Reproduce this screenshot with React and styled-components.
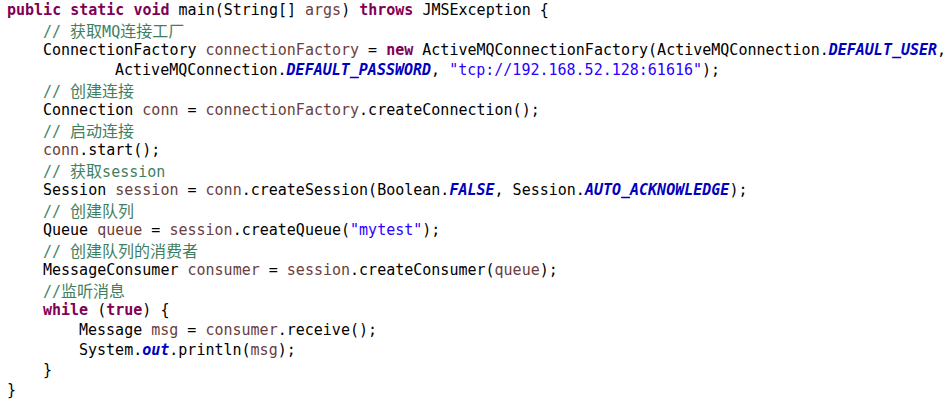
import React from 'react';
import styled, { createGlobalStyle } from 'styled-components';

const GlobalStyle = createGlobalStyle`
  html, body {
    margin: 0;
    padding: 0;
    background: #ffffff;
  }
`;

const S_Editor = styled.div`
  width: 951px;
  height: 409px;
  box-sizing: border-box;
  padding: 0 0 0 7px;
  background: #ffffff;
  font-family: 'DejaVu Sans Mono', 'Liberation Mono', 'Noto Sans CJK SC', monospace;
  font-size: 15px;
  color: #000000;
  display: flex;
  flex-direction: column;
`;

const S_Line = styled.div`
  height: 20px;
  line-height: 20px;
  white-space: pre;
  padding-left: ${(p) => p.$indent * 9}px;
`;

const S_Kw = styled.span`
  color: #7f0055;
  font-weight: bold;
`;

const S_Cmt = styled.span`
  color: #3f7f5f;
`;

const S_Var = styled.span`
  color: #6a3e3e;
`;

const S_Str = styled.span`
  color: #2a00ff;
`;

const S_Field = styled.span`
  color: #0000c0;
  font-weight: bold;
  font-style: italic;
`;

const S_Cjk = styled.span`
  font-family: 'Noto Sans CJK SC', sans-serif;
  font-size: 16px;
`;

const Cmt = ({ children }) => (
  <S_Cmt>
    {React.Children.map(children, (c) =>
      typeof c === 'string'
        ? c.split(/([\u4e00-\u9fff]+)/).map((part, i) =>
            /[\u4e00-\u9fff]/.test(part) ? <S_Cjk key={i}>{part}</S_Cjk> : part
          )
        : c
    )}
  </S_Cmt>
);

export default function App() {
  return (
    <>
      <GlobalStyle />
      <S_Editor>
        <S_Line $indent={0}>
          <S_Kw>public</S_Kw> <S_Kw>static</S_Kw> <S_Kw>void</S_Kw> main(String[] <S_Var>args</S_Var>) <S_Kw>throws</S_Kw> JMSException {'{'}
        </S_Line>
        <S_Line $indent={4}>
          <Cmt>// 获取MQ连接工厂</Cmt>
        </S_Line>
        <S_Line $indent={4}>
          ConnectionFactory <S_Var>connectionFactory</S_Var> = <S_Kw>new</S_Kw> ActiveMQConnectionFactory(ActiveMQConnection.<S_Field>DEFAULT_USER</S_Field>,
        </S_Line>
        <S_Line $indent={12}>
          ActiveMQConnection.<S_Field>DEFAULT_PASSWORD</S_Field>, <S_Str>"tcp://192.168.52.128:61616"</S_Str>);
        </S_Line>
        <S_Line $indent={4}>
          <Cmt>// 创建连接</Cmt>
        </S_Line>
        <S_Line $indent={4}>
          Connection <S_Var>conn</S_Var> = <S_Var>connectionFactory</S_Var>.createConnection();
        </S_Line>
        <S_Line $indent={4}>
          <Cmt>// 启动连接</Cmt>
        </S_Line>
        <S_Line $indent={4}>
          <S_Var>conn</S_Var>.start();
        </S_Line>
        <S_Line $indent={4}>
          <Cmt>// 获取session</Cmt>
        </S_Line>
        <S_Line $indent={4}>
          Session <S_Var>session</S_Var> = <S_Var>conn</S_Var>.createSession(Boolean.<S_Field>FALSE</S_Field>, Session.<S_Field>AUTO_ACKNOWLEDGE</S_Field>);
        </S_Line>
        <S_Line $indent={4}>
          <Cmt>// 创建队列</Cmt>
        </S_Line>
        <S_Line $indent={4}>
          Queue <S_Var>queue</S_Var> = <S_Var>session</S_Var>.createQueue(<S_Str>"mytest"</S_Str>);
        </S_Line>
        <S_Line $indent={4}>
          <Cmt>// 创建队列的消费者</Cmt>
        </S_Line>
        <S_Line $indent={4}>
          MessageConsumer <S_Var>consumer</S_Var> = <S_Var>session</S_Var>.createConsumer(<S_Var>queue</S_Var>);
        </S_Line>
        <S_Line $indent={4}>
          <Cmt>//监听消息</Cmt>
        </S_Line>
        <S_Line $indent={4}>
          <S_Kw>while</S_Kw> (<S_Kw>true</S_Kw>) {'{'}
        </S_Line>
        <S_Line $indent={8}>
          Message <S_Var>msg</S_Var> = <S_Var>consumer</S_Var>.receive();
        </S_Line>
        <S_Line $indent={8}>
          System.<S_Field>out</S_Field>.println(<S_Var>msg</S_Var>);
        </S_Line>
        <S_Line $indent={4}>{'}'}</S_Line>
        <S_Line $indent={0}>{'}'}</S_Line>
      </S_Editor>
    </>
  );
}
